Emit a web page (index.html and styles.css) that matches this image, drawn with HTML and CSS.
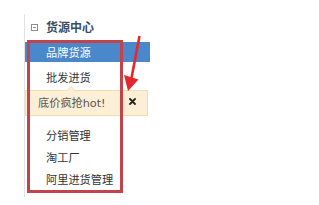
FILE: index.html
```html
<!DOCTYPE html>
<html lang="zh">
<head>
<meta charset="utf-8">
<link rel="stylesheet" href="styles.css">
</head>
<body>
<div class="sidebar">
  <div class="header">
    <svg class="fold" width="7" height="7" viewBox="0 0 7 7"><rect x="0.5" y="0.5" width="6" height="6" fill="none" stroke="#8d8d8d" stroke-width="1"/><line x1="2" y1="3.5" x2="5" y2="3.5" stroke="#8d8d8d" stroke-width="1"/></svg>
    <span class="title">货源中心</span>
  </div>
  <ul class="menu">
    <li class="item active">品牌货源</li>
    <li class="item second">批发进货</li>
  </ul>
  <div class="tip">
    <span class="tip-text">底价疯抢hot!</span>
    <svg class="close" width="7" height="7" viewBox="0 0 7 7"><path d="M1 1 L6 6 M6 1 L1 6" stroke="#222" stroke-width="1.8" stroke-linecap="round"/></svg>
  </div>
  <ul class="menu lower">
    <li class="item">分销管理</li>
    <li class="item">淘工厂</li>
    <li class="item">阿里进货管理</li>
  </ul>
  <div class="mark"></div>
  <svg class="arrow" width="27" height="60" viewBox="118 34 27 60"><line x1="139.5" y1="36" x2="131.5" y2="78" stroke="#e4282d" stroke-width="2.6"/><polygon points="124,75 138.5,79.5 128,91" fill="#e4282d"/></svg>
</div>
</body>
</html>
```

FILE: styles.css
```css
html, body {
  margin: 0;
  padding: 0;
  background: #ffffff;
}
body {
  font-family: "DejaVu Sans", "Noto Sans CJK SC", sans-serif;
  color: #333333;
}
.sidebar {
  position: relative;
  margin: 14px 0 0 24px;
  border-left: 1px solid #e3e3e3;
  width: 160px;
  height: 183px;
}
.header {
  display: flex;
  align-items: center;
  height: 28px;
  padding-left: 6px;
  box-sizing: border-box;
  padding-bottom: 2px;
}
.fold {
  display: block;
  margin-right: 8px;
  margin-top: 1px;
}
.title {
  font-family: "Noto Sans CJK SC", sans-serif;
  font-size: 12px;
  font-weight: bold;
  color: #3a4e63;
  line-height: 18px;
}
.menu {
  list-style: none;
  margin: 0;
  padding: 0;
  width: 125px;
}
.item {
  font-family: "Noto Sans CJK SC", sans-serif;
  font-size: 11.2px;
  height: 22px;
  line-height: 22px;
  padding-left: 21px;
  color: #333333;
}
.item.active {
  height: 20px;
  line-height: 20px;
  background: #4a87cb;
  color: #ffffff;
  margin-top: 0;
}
.item.second {
  margin-top: 4px;
}
.tip {
  position: relative;
  margin-top: 2px;
  width: 123px;
  height: 26px;
  box-sizing: border-box;
  background: #fcefd5;
  border: 1px solid #f2ddb2;
  display: flex;
  align-items: center;
  justify-content: space-between;
  padding: 0 11px 0 12px;
}
.tip::before {
  content: "";
  position: absolute;
  left: 40px;
  top: -5px;
  border-left: 5px solid transparent;
  border-right: 5px solid transparent;
  border-bottom: 5px solid #f2ddb2;
}
.tip::after {
  content: "";
  position: absolute;
  left: 41px;
  top: -4px;
  border-left: 4px solid transparent;
  border-right: 4px solid transparent;
  border-bottom: 4px solid #fcefd5;
}
.tip-text {
  font-size: 11.2px;
  color: #555555;
  line-height: 24px;
  padding-top: 1px;
}
.close {
  display: block;
  margin-top: -3px;
}
.menu.lower {
  margin-top: 8px;
}
.mark {
  position: absolute;
  left: 2px;
  top: 26px;
  width: 90px;
  height: 147px;
  border: 3px solid #c3434b;
}
.arrow {
  position: absolute;
  left: 93px;
  top: 20px;
}
```
